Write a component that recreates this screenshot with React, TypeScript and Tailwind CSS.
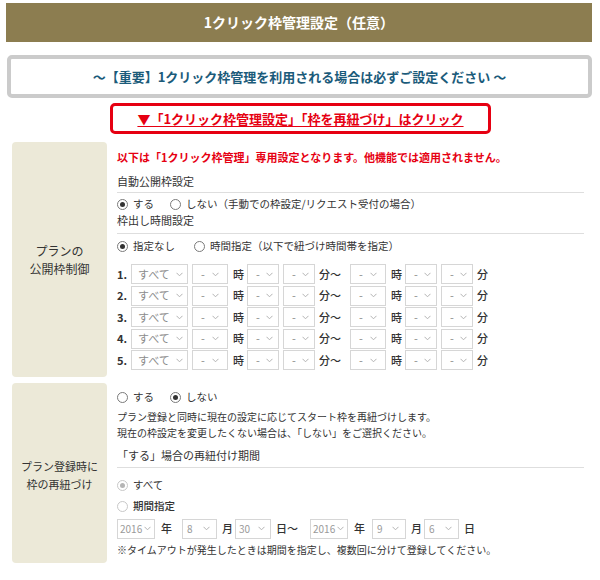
import React from "react";

function Chev() {
  return (
    <svg width="7" height="5" viewBox="0 0 7 5" className="shrink-0">
      <path d="M0.5 0.8 L3.5 3.8 L6.5 0.8" fill="none" stroke="#b3b3b3" strokeWidth="1" />
    </svg>
  );
}

function Sel({ className, text }: { className: string; text: string }) {
  return (
    <div
      className={
        "h-[20px] border border-[#d6d6d6] bg-white flex items-center justify-between text-[#8c8c8c] leading-none " +
        className
      }
    >
      <span>{text}</span>
      <Chev />
    </div>
  );
}

function Radio({ checked, disabled }: { checked?: boolean; disabled?: boolean }) {
  return (
    <span
      className={
        "w-[11px] h-[11px] rounded-full border flex items-center justify-center shrink-0 bg-white " +
        (disabled ? "border-[#c8c8c8]" : "border-[#7a7a7a]")
      }
    >
      {checked ? (
        <span className={"w-[5px] h-[5px] rounded-full " + (disabled ? "bg-[#b5b5b5]" : "bg-[#333]")} />
      ) : null}
    </span>
  );
}

function TimeRow({ n }: { n: string }) {
  return (
    <div className="flex items-center h-[20px] text-[11px] text-[#333] leading-none">
      <span className="w-[14px] font-bold">{n}</span>
      <Sel className="w-[57px] pl-[6px] pr-[4px] text-[11px]" text="すべて" />
      <Sel className="w-[36px] ml-[4px] pl-[8px] pr-[8px] text-[11px]" text="-" />
      <span className="ml-[5px] w-[14px] font-medium">時</span>
      <Sel className="w-[32px] pl-[8px] pr-[5px] text-[11px]" text="-" />
      <Sel className="w-[32px] ml-[4px] pl-[8px] pr-[5px] text-[11px]" text="-" />
      <span className="ml-[4px] w-[27px] font-medium">分～</span>
      <Sel className="w-[36px] ml-[4px] pl-[8px] pr-[8px] text-[11px]" text="-" />
      <span className="ml-[5px] w-[14px] font-medium">時</span>
      <Sel className="w-[32px] pl-[8px] pr-[5px] text-[11px]" text="-" />
      <Sel className="w-[32px] ml-[4px] pl-[8px] pr-[5px] text-[11px]" text="-" />
      <span className="ml-[4px] font-medium">分</span>
    </div>
  );
}

export default function App() {
  return (
    <div className="w-[600px] h-[580px] bg-white pl-[6px] pr-[8px] pt-[3px] font-['Noto_Sans_CJK_JP','Noto_Sans',sans-serif] text-[#333]">
      <div className="h-[39px] bg-[#8c7d50] flex items-center justify-center text-white font-bold text-[14px]">
        1クリック枠管理設定（任意）
      </div>
      <div className="mt-[13px] ml-[1px] h-[43px] border-[4px] border-[#cbcbcb] rounded-[5px] flex items-center justify-center text-[13px] font-bold text-[#1b5b7a]">
        ～【重要】1クリック枠管理を利用される場合は必ずご設定ください ～
      </div>
      <div className="mt-[5px] flex">
        <div className="ml-[104px] w-[381px] h-[31px] border-[3px] border-[#e60012] rounded-[5px] flex items-center justify-center text-[13px] font-bold text-[#e60012] underline underline-offset-2">
          ▼「1クリック枠管理設定」「枠を再紐づけ」はクリック
        </div>
      </div>

      {/* Row 1 */}
      <div className="mt-[8px] flex">
        <div className="ml-[6px] w-[95px] h-[235px] bg-[#ece9d8] rounded-[4px] flex flex-col items-center justify-center text-[12px] leading-[18px] text-[#333]">
          <span>プランの</span>
          <span>公開枠制御</span>
        </div>
        <div className="ml-[10px] w-[467px] flex flex-col">
          <div className="mt-[6px] h-[18px] flex items-center text-[11px] font-bold text-[#e60012]">
            以下は「1クリック枠管理」専用設定となります。他機能では適用されません。
          </div>
          <div className="h-[27px] pt-[4px] flex items-center border-b border-[#dedede] text-[11px]">
            自動公開枠設定
          </div>
          <div className="h-[22px] flex items-center text-[10.5px]">
            <Radio checked />
            <span className="ml-[5px]">する</span>
            <span className="ml-[16px]">
              <Radio />
            </span>
            <span className="ml-[5px]">しない（手動での枠設定/リクエスト受付の場合）</span>
          </div>
          <div className="h-[19px] pb-[8px] flex items-center border-b border-[#dedede] text-[11px]">
            枠出し時間設定
          </div>
          <div className="h-[24px] flex items-center text-[10.5px]">
            <Radio checked />
            <span className="ml-[5px]">指定なし</span>
            <span className="ml-[19px]">
              <Radio />
            </span>
            <span className="ml-[5px]">時間指定（以下で紐づけ時間帯を指定）</span>
          </div>
          <div className="mt-[6px] flex flex-col gap-[1.5px]">
            <TimeRow n="1." />
            <TimeRow n="2." />
            <TimeRow n="3." />
            <TimeRow n="4." />
            <TimeRow n="5." />
          </div>
        </div>
      </div>

      {/* Row 2 */}
      <div className="mt-[6px] flex">
        <div className="ml-[6px] w-[95px] h-[180px] bg-[#ece9d8] rounded-[4px] flex flex-col items-center justify-center pt-[4px] text-[11px] leading-[18px] text-[#333]">
          <span>プラン登録時に</span>
          <span>枠の再紐づけ</span>
        </div>
        <div className="ml-[10px] w-[467px] flex flex-col">
          <div className="mt-[3px] h-[22px] flex items-center text-[10.5px]">
            <Radio />
            <span className="ml-[5px]">する</span>
            <span className="ml-[16px]">
              <Radio checked />
            </span>
            <span className="ml-[5px]">しない</span>
          </div>
          <div className="h-[16px] flex items-center text-[10px]">
            プラン登録と同時に現在の設定に応じてスタート枠を再紐づけします。
          </div>
          <div className="h-[16px] flex items-center text-[10px]">
            現在の枠設定を変更したくない場合は、「しない」をご選択ください。
          </div>
          <div className="h-[28px] pt-[3px] flex items-center border-b border-[#dedede] text-[11px]">
            「する」場合の再紐付け期間
          </div>
          <div className="mt-[7px] h-[20px] flex items-center text-[10.5px]">
            <Radio checked disabled />
            <span className="ml-[5px]">すべて</span>
          </div>
          <div className="mt-[1px] h-[20px] flex items-center text-[10.5px]">
            <Radio disabled />
            <span className="ml-[5px] font-medium">期間指定</span>
          </div>
          <div className="mt-[3px] h-[19px] flex items-center text-[11px] leading-none">
            <Sel className="w-[38px] h-[19px] pl-[2px] pr-[3px] text-[10px] text-[#9a9a9a]" text="2016" />
            <span className="ml-[6px] w-[21px] font-medium">年</span>
            <Sel className="w-[35px] h-[19px] pl-[4px] pr-[6px] text-[10px] text-[#9a9a9a]" text="8" />
            <span className="ml-[5px] w-[13px] font-medium">月</span>
            <Sel className="w-[36px] h-[19px] pl-[3px] pr-[5px] text-[10px] text-[#9a9a9a]" text="30" />
            <span className="ml-[5px] w-[34px] font-medium">日～</span>
            <Sel className="w-[38px] h-[19px] pl-[2px] pr-[3px] text-[10px] text-[#9a9a9a]" text="2016" />
            <span className="ml-[6px] w-[18px] font-medium">年</span>
            <Sel className="w-[34px] h-[19px] pl-[4px] pr-[6px] text-[10px] text-[#9a9a9a]" text="9" />
            <span className="ml-[5px] w-[13px] font-medium">月</span>
            <Sel className="w-[35px] h-[19px] pl-[4px] pr-[6px] text-[10px] text-[#9a9a9a]" text="6" />
            <span className="ml-[5px] font-medium">日</span>
          </div>
          <div className="mt-[3px] h-[16px] flex items-center text-[10px]">
            ※タイムアウトが発生したときは期間を指定し、複数回に分けて登録してください。
          </div>
        </div>
      </div>
    </div>
  );
}
